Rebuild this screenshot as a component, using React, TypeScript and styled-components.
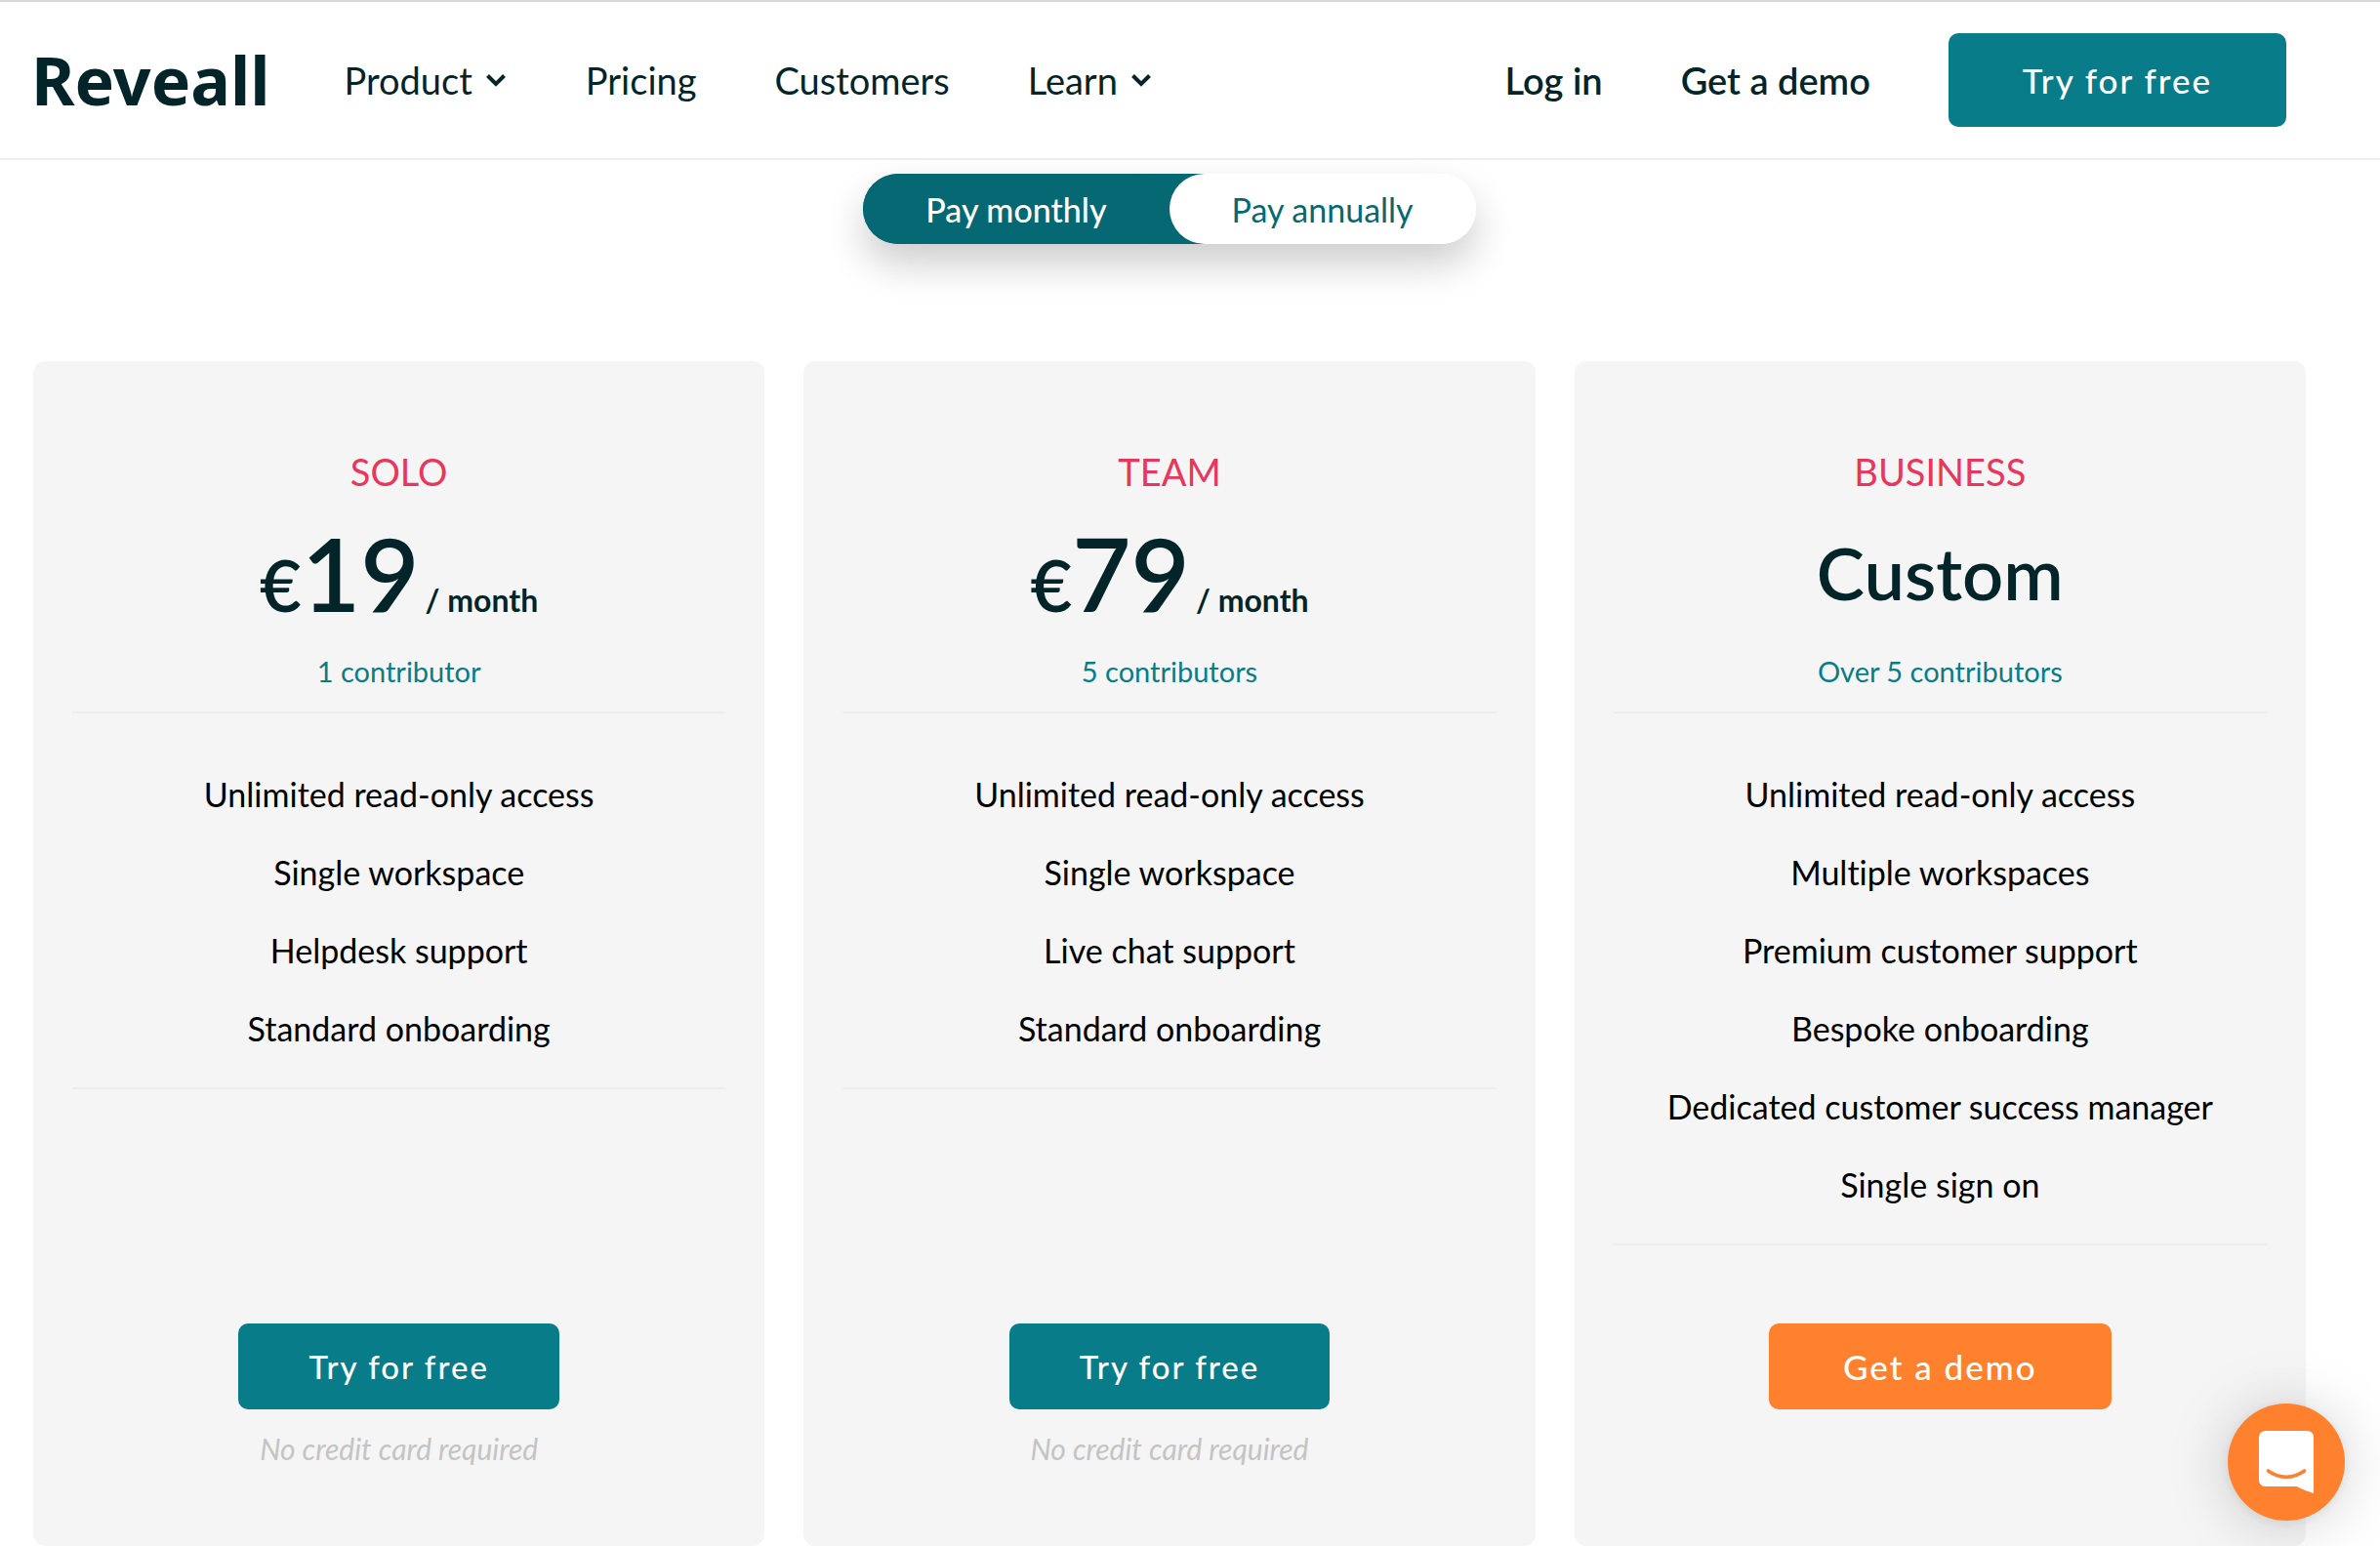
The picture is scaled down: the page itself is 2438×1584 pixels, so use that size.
import React, { useState } from "react";
import styled, { createGlobalStyle, css } from "styled-components";

const color = {
  ink: "#032529",
  teal: "#087c88",
  tealDark: "#066872",
  orange: "#ff812e",
  pink: "#e8365d",
  panel: "#f5f5f5",
  line: "#ededed",
  note: "#c4c4c4",
};

const GlobalStyle = createGlobalStyle`
  *, *::before, *::after { box-sizing: border-box; }
  body {
    margin: 0;
    background: #fff;
    color: ${color.ink};
    font-family: Lato, "Open Sans", sans-serif;
    font-size: 32px;
    font-variant-ligatures: none;
    line-height: 40px;
  }
  button { font-family: inherit; border: 0; cursor: pointer; }
  a { color: inherit; text-decoration: none; }
`;

const Header = styled.header`
  position: relative;
  z-index: 1;
  display: flex;
  align-items: center;
  height: 164px;
  padding: 0 96px 0 32px;
  background: #fff;
  border-top: 2px solid #d5dadd;
  border-bottom: 2px solid #eee;
`;

const Logo = styled.a`
  margin-right: 76px;
  font-family: "Noto Sans", sans-serif;
  font-size: 68px;
  font-weight: 700;
  line-height: 80px;
`;

const Nav = styled.nav`
  display: flex;
  flex: 1;
  align-items: center;
  gap: 80px;
`;

const navText = css`
  padding: 0;
  color: ${color.ink};
  background: none;
  font-size: 38px;
  line-height: 44px;
  white-space: nowrap;
`;

const NavLink = styled.a<{ $strong?: boolean }>`
  ${navText}
  font-weight: ${(p) => (p.$strong ? 600 : 400)};
`;

const NavMenu = styled.button`
  ${navText}
  display: flex;
  align-items: center;
  gap: 12px;
  font-weight: 400;
`;

const Account = styled.div`
  display: flex;
  align-items: center;
  gap: 80px;
`;

const Button = styled.button<{ $size?: "large" | "wide"; $orange?: boolean }>`
  height: ${(p) => (p.$size === "large" ? 96 : 88)}px;
  padding: 0 ${(p) => (p.$size ? 76 : 72)}px;
  border-radius: 10px;
  color: #fff;
  background: ${(p) => (p.$orange ? color.orange : color.teal)};
  font-size: ${(p) => (p.$size ? 35 : 33)}px;
  font-weight: 500;
  letter-spacing: 2px;
  white-space: nowrap;
`;

const Main = styled.main`
  display: flex;
  flex-direction: column;
  align-items: center;
  gap: 120px;
  padding: 14px 76px 0 34px;
`;

const Toggle = styled.div`
  display: flex;
  border-radius: 36px;
  background: linear-gradient(90deg, ${color.tealDark} 70%, #fff 70%);
  box-shadow: 0 20px 40px rgba(0, 0, 0, 0.2);
`;

const ToggleOption = styled.button<{ $active: boolean }>`
  height: 72px;
  padding: 0 64px;
  border-radius: 36px;
  color: ${(p) => (p.$active ? "#fff" : color.tealDark)};
  background: ${(p) => (p.$active ? color.tealDark : "#fff")};
  font-size: 34px;
  font-weight: ${(p) => (p.$active ? 500 : 400)};
`;

const Plans = styled.section`
  display: grid;
  grid-template-columns: repeat(3, 1fr);
  gap: 40px;
  width: 100%;
`;

const Card = styled.article`
  display: flex;
  flex-direction: column;
  padding: 91px 40px 80px;
  border-radius: 12px;
  background: ${color.panel};
  text-align: center;
`;

const PlanName = styled.h2`
  margin: 0 0 10px;
  color: ${color.pink};
  font-size: 38px;
  font-weight: 400;
  line-height: 44px;
  text-transform: uppercase;
`;

const Price = styled.p`
  display: flex;
  align-items: baseline;
  justify-content: center;
  height: 144px;
  margin: 0;
  font-size: 74px;
  font-weight: 600;
  line-height: 144px;
`;

const Amount = styled.span`
  font-size: 104px;
`;

const Period = styled.span`
  margin-left: 6px;
  font-size: 32px;
  font-weight: 700;
`;

const Contributors = styled.p`
  margin: 0;
  padding: 9px 0 21px;
  border-bottom: 2px solid ${color.line};
  color: ${color.teal};
  font-size: 29px;
  line-height: 40px;
`;

const Features = styled.ul`
  margin: 0 0 80px;
  padding: 43px 0 20px;
  border-bottom: 2px solid ${color.line};
  list-style: none;
  color: #000;
  font-size: 34px;
  line-height: 80px;
`;

const Action = styled.div`
  display: flex;
  flex-direction: column;
  align-items: center;
  gap: 20px;
  min-height: 148px;
  margin-top: auto;
`;

const Note = styled.small`
  color: ${color.note};
  font-size: 30px;
  font-style: italic;
  line-height: 40px;
`;

const ChatButton = styled.button`
  position: fixed;
  right: 36px;
  bottom: 26px;
  z-index: 2;
  display: flex;
  align-items: center;
  justify-content: center;
  width: 120px;
  height: 120px;
  padding: 0;
  border-radius: 50%;
  background: ${color.orange};
  box-shadow: 0 2px 12px rgba(0, 0, 0, 0.08), 0 4px 64px rgba(0, 0, 0, 0.18);
`;

const Chevron = () => (
  <svg width="24" height="18" viewBox="0 0 24 18" fill="none" aria-hidden="true">
    <path d="M3.5 4.5 L12 13 L20.5 4.5" stroke="currentColor" strokeWidth="4" />
  </svg>
);

const ChatIcon = () => (
  <svg width="56" height="64" viewBox="0 0 56 64" fill="none" aria-hidden="true">
    <path
      d="M7 0H49Q56 0 56 7V64Q46 61 38.500 57H7Q0 57 0 50V7Q0 0 7 0Z"
      fill="#fff"
    />
    <path
      d="M9.500 41Q18 47.200 28 47.200T46.500 41"
      stroke={color.orange}
      strokeWidth="3.600"
      strokeLinecap="round"
    />
  </svg>
);

type Plan = {
  name: string;
  price?: number;
  contributors: string;
  features: string[];
};

const plans: Plan[] = [
  {
    name: "Solo",
    price: 19,
    contributors: "1 contributor",
    features: ["Unlimited read-only access", "Single workspace", "Helpdesk support", "Standard onboarding"],
  },
  {
    name: "Team",
    price: 79,
    contributors: "5 contributors",
    features: ["Unlimited read-only access", "Single workspace", "Live chat support", "Standard onboarding"],
  },
  {
    name: "Business",
    contributors: "Over 5 contributors",
    features: [
      "Unlimited read-only access",
      "Multiple workspaces",
      "Premium customer support",
      "Bespoke onboarding",
      "Dedicated customer success manager",
      "Single sign on",
    ],
  },
];

const PlanCard = ({ plan }: { plan: Plan }) => (
  <Card>
    <PlanName>{plan.name}</PlanName>
    <Price>
      {plan.price ? (
        <>
          €<Amount>{plan.price}</Amount>
          <Period>/ month</Period>
        </>
      ) : (
        "Custom"
      )}
    </Price>
    <Contributors>{plan.contributors}</Contributors>
    <Features>
      {plan.features.map((feature) => (
        <li key={feature}>{feature}</li>
      ))}
    </Features>
    <Action>
      {plan.price ? (
        <>
          <Button>Try for free</Button>
          <Note>No credit card required</Note>
        </>
      ) : (
        <Button $size="wide" $orange>Get a demo</Button>
      )}
    </Action>
  </Card>
);

export default function App() {
  const [billing, setBilling] = useState("monthly");
  return (
    <>
      <GlobalStyle />
      <Header>
        <Logo href="#">Reveall</Logo>
        <Nav>
          <NavMenu>
            Product <Chevron />
          </NavMenu>
          <NavLink href="#pricing">Pricing</NavLink>
          <NavLink href="#customers">Customers</NavLink>
          <NavMenu>
            Learn <Chevron />
          </NavMenu>
        </Nav>
        <Account>
          <NavLink $strong href="#login">Log in</NavLink>
          <NavLink $strong href="#demo">Get a demo</NavLink>
          <Button $size="large">Try for free</Button>
        </Account>
      </Header>
      <Main>
        <Toggle>
          <ToggleOption $active={billing === "monthly"} onClick={() => setBilling("monthly")}>
            Pay monthly
          </ToggleOption>
          <ToggleOption $active={billing === "annually"} onClick={() => setBilling("annually")}>
            Pay annually
          </ToggleOption>
        </Toggle>
        <Plans id="pricing">
          {plans.map((plan) => (
            <PlanCard key={plan.name} plan={plan} />
          ))}
        </Plans>
      </Main>
      <ChatButton aria-label="Open chat">
        <ChatIcon />
      </ChatButton>
    </>
  );
}
